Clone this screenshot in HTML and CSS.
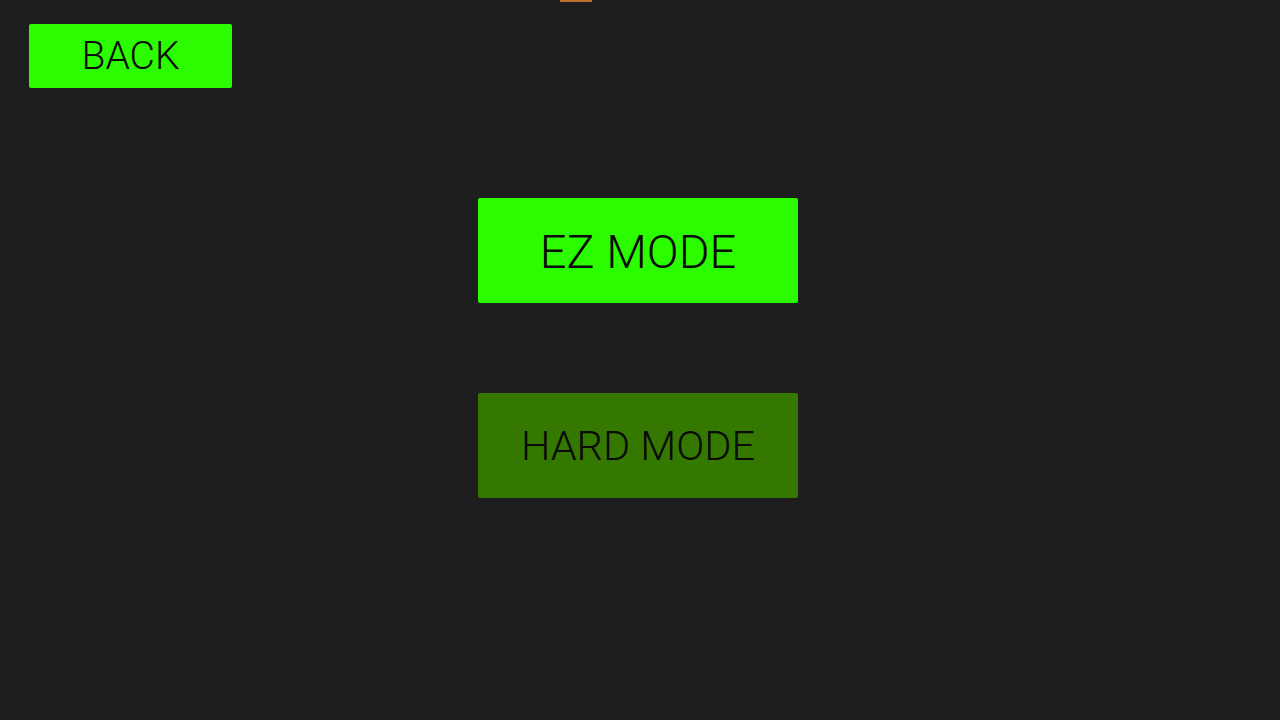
FILE: index.html
```html
<!DOCTYPE html>
<html>
<head>
<meta charset="utf-8">
<link rel="stylesheet" href="styles.css">
</head>
<body>
<div class="notch"></div>
<div class="screen">
  <div class="top">
    <button class="btn back">BACK</button>
  </div>
  <div class="modes">
    <button class="btn mode ez">EZ MODE</button>
    <button class="btn mode hard">HARD MODE</button>
  </div>
</div>
</body>
</html>
```

FILE: styles.css
```css
html, body {
  margin: 0;
  padding: 0;
  width: 1280px;
  height: 720px;
  overflow: hidden;
  background: #1e1e1e;
}
.notch {
  position: absolute;
  left: 560px;
  top: 0;
  width: 32px;
  height: 2px;
  background: #c0702a;
}
.screen {
  display: flex;
  flex-direction: column;
  padding: 24px 0 0 29px;
}
.btn {
  border: none;
  border-radius: 2px;
  font-family: Roboto, "Liberation Sans", sans-serif;
  font-weight: 300;
  color: #0a0a0a;
  padding: 0;
  display: flex;
  align-items: center;
  justify-content: center;
  cursor: pointer;
}
.back {
  width: 203px;
  height: 64px;
  background: #2cfc00;
  font-size: 39px;
}
.modes {
  display: flex;
  flex-direction: column;
  gap: 90px;
  margin-top: 110px;
  padding-left: 449px;
}
.mode {
  width: 320px;
  height: 105px;
}
.ez {
  background: #2cfc00;
  font-size: 47px;
  padding-top: 2px;
}
.hard {
  background: #347800;
  font-size: 41.5px;
}
```
